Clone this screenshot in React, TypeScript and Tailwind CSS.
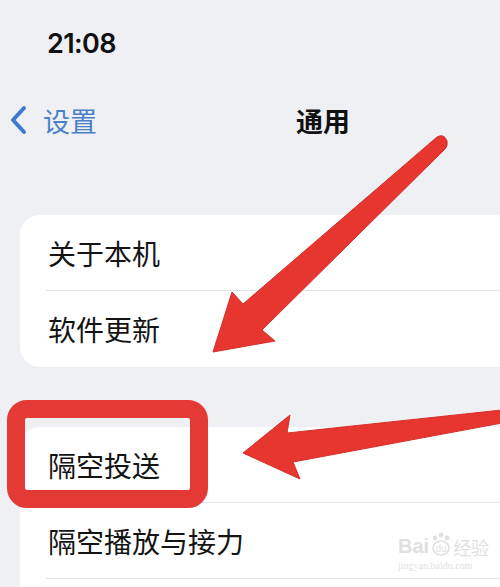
import React from 'react'

const cjk = "font-['Noto_Sans_CJK_SC','Noto_Sans',sans-serif]"

function Row({ label, last }: { label: string; last?: boolean }) {
  return (
    <div
      className={`flex items-center h-[76px] ml-[26px] pl-[2px] ${
        last ? '' : 'border-b border-[#e2e2e6]'
      }`}
    >
      <span className={`${cjk} text-[28px] leading-none text-[#141414]`}>{label}</span>
    </div>
  )
}

export default function App() {
  return (
    <div className="relative w-[500px] h-[587px] overflow-hidden bg-[#eef0f4]">
      {/* status bar */}
      <div className="h-[90px] pt-[30px] pl-[47px]">
        <span className="font-['Inter',sans-serif] text-[27px] font-semibold leading-none tracking-[-0.6px] text-[#111]">
          21:08
        </span>
      </div>

      {/* nav bar */}
      <div className="flex items-center h-[60px]">
        <svg className="ml-[9px]" width="18" height="30" viewBox="0 0 18 30">
          <path
            d="M15 3 L4 15 L15 27"
            fill="none"
            stroke="#3f7ad0"
            strokeWidth="4"
            strokeLinecap="round"
            strokeLinejoin="round"
          />
        </svg>
        <span className={`${cjk} ml-[16px] text-[27px] leading-none text-[#4a80c8]`}>设置</span>
        <span className={`${cjk} ml-[199px] text-[27px] font-bold leading-none text-[#111]`}>通用</span>
      </div>

      {/* group 1 */}
      <div className="mt-[65px] ml-[20px] rounded-l-[20px] bg-white">
        <Row label="关于本机" />
        <Row label="软件更新" last />
      </div>

      {/* group 2 */}
      <div className="mt-[60px] ml-[20px] rounded-l-[20px] bg-white">
        <Row label="隔空投送" />
        <Row label="隔空播放与接力" />
        <div className="h-[40px]" />
      </div>

      {/* watermark */}
      <div className="absolute left-[398px] top-[532px] flex flex-col items-start opacity-70">
        <div className="flex items-end">
          <span className="font-['Liberation_Sans',sans-serif] text-[20px] font-bold leading-none text-[#d4d4d4]">
            Bai
          </span>
          <svg width="22" height="24" viewBox="0 0 22 24" className="mx-[1px]">
            <circle cx="5" cy="6" r="2.4" fill="#d4d4d4" />
            <circle cx="11" cy="3" r="2.4" fill="#d4d4d4" />
            <circle cx="17" cy="6" r="2.4" fill="#d4d4d4" />
            <ellipse cx="11" cy="16" rx="8" ry="7" fill="none" stroke="#d4d4d4" strokeWidth="1.6" />
            <text x="11" y="20" fontSize="10" textAnchor="middle" fill="#d4d4d4" fontFamily="Liberation Sans">du</text>
          </svg>
          <span className={`${cjk} text-[18px] leading-none text-[#d4d4d4]`}>经验</span>
        </div>
        <span className="font-['Liberation_Serif',serif] text-[10px] leading-none mt-[5px] text-[#d4d4d4]">
          jingyan.baidu.com
        </span>
      </div>

      {/* annotations */}
      <div className="absolute left-[7px] top-[400px] w-[201px] h-[108px] rounded-[20px] border-[18px] border-[#e33a35]" />

      <svg className="absolute left-0 top-0" width="500" height="587" viewBox="0 0 500 587">
        <path
          d="M213 352 L232 292 L243 304 L437 137 Q444 133 447 141 Q448 146 445 149 L262 330 L275 341 Z"
          fill="#e7352f"
          stroke="#d42e29"
          strokeWidth="1"
          strokeLinejoin="round"
        />
        <path
          d="M243 453 L290 415 L287 433 L502 410 L502 423 L293 462 L300 479 Z"
          fill="#e7352f"
          stroke="#d42e29"
          strokeWidth="1"
          strokeLinejoin="round"
        />
      </svg>
    </div>
  )
}
